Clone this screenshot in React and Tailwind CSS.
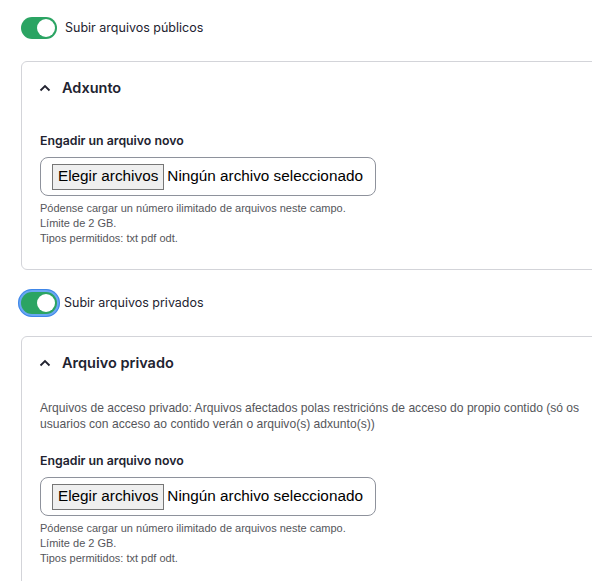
import React from "react";

const inter = { fontFamily: "Inter, 'Noto Sans', sans-serif" };
const arial = { fontFamily: "'Liberation Sans', Arial, sans-serif" };

function Toggle({ focused }) {
  return (
    <div
      className={
        "relative h-[22px] w-[36px] shrink-0 rounded-full bg-[#2ba463] " +
        (focused ? "ring-[3px] ring-[#6aa7f2] outline outline-1 outline-offset-[2px] outline-[#3f86e8]" : "")
      }
    >
      <div className="absolute right-[2px] top-[2px] h-[18px] w-[18px] rounded-full bg-white" />
    </div>
  );
}

function Chevron() {
  return (
    <svg width="12" height="8" viewBox="0 0 12 8" className="shrink-0">
      <path d="M1.5 6.5 L6 2 L10.5 6.5" fill="none" stroke="#222330" strokeWidth="1.8" />
    </svg>
  );
}

function FileField() {
  return (
    <div>
      <div className="text-[12.3px] leading-[18px] font-semibold text-[#222330]" style={inter}>
        Engadir un arquivo novo
      </div>
      <div
        className="mt-[7px] flex h-[39px] w-[336px] items-center gap-[3px] whitespace-nowrap rounded-lg border border-[#8e929c] px-[11px] text-[15.3px] text-black"
        style={arial}
      >
        <span className="flex h-[26px] shrink-0 items-center whitespace-nowrap border border-[#767676] bg-[#efefef] px-[5px] text-black">
          Elegir archivos
        </span>
        <span className="whitespace-nowrap">Ningún archivo seleccionado</span>
      </div>
      <div className="mt-[5px] text-[11px] leading-[15px] text-[#55565b]" style={arial}>
        <div>Pódense cargar un número ilimitado de arquivos neste campo.</div>
        <div>Límite de 2 GB.</div>
        <div>Tipos permitidos: txt pdf odt.</div>
      </div>
    </div>
  );
}

function Summary({ title }) {
  return (
    <div className="flex h-[51px] items-center gap-[11px] pl-[17px] pt-[1px]">
      <Chevron />
      <span className="text-[14.5px] font-semibold text-[#222330]" style={inter}>
        {title}
      </span>
    </div>
  );
}

export default function App() {
  return (
    <div className="h-[581px] w-[592px] overflow-hidden bg-white pl-[21px] pt-[17px]" style={inter}>
      <div className="flex items-center gap-[8px]">
        <Toggle />
        <span className="text-[12.5px] text-[#222330]">Subir arquivos públicos</span>
      </div>

      <div className="mt-[22px] w-[620px] rounded-md border border-[#d3d4d9] pb-[23px]">
        <Summary title="Adxunto" />
        <div className="pl-[18px] pt-[19px]">
          <FileField />
        </div>
      </div>

      <div className="mt-[22px] flex items-center gap-[7px]">
        <Toggle focused />
        <span className="text-[12.5px] text-[#222330]">Subir arquivos privados</span>
      </div>

      <div className="mt-[22px] w-[620px] rounded-md border border-[#d3d4d9] pb-[23px]">
        <Summary title="Arquivo privado" />
        <div className="pl-[18px] pt-[12px]">
          <div className="w-[552px] text-[12.1px] leading-[16px] text-[#55565b]" style={arial}>
            Arquivos de acceso privado: Arquivos afectados polas restricións de acceso do propio contido (só os usuarios con acceso ao contido verán o arquivo(s) adxunto(s))
          </div>
          <div className="pt-[20px]">
            <FileField />
          </div>
        </div>
      </div>
    </div>
  );
}
